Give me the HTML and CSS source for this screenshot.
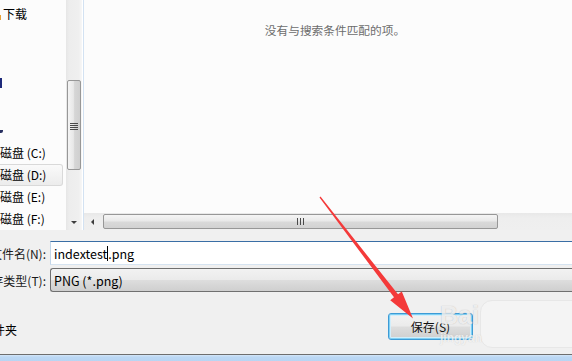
FILE: index.html
```html
<!DOCTYPE html>
<html lang="zh-CN">
<head>
<meta charset="utf-8">
<title>保存</title>
<link rel="stylesheet" href="styles.css">
</head>
<body>
<div class="dialog">
  <div class="top">
    <div class="nav">
      <div class="nav-item first"><span class="ico-edge"></span><span class="nav-text">下载</span></div>
      <div class="nav-mark mark-a"></div>
      <div class="nav-mark mark-b"></div>
      <div class="nav-item drive"><span class="nav-text">本地磁盘 (C:)</span></div>
      <div class="nav-item drive selected"><span class="nav-text">本地磁盘 (D:)</span></div>
      <div class="nav-item drive"><span class="nav-text">本地磁盘 (E:)</span></div>
      <div class="nav-item drive"><span class="nav-text">本地磁盘 (F:)</span></div>
    </div>
    <div class="vscroll">
      <div class="vthumb"><div class="vgrip"><i></i><i></i><i></i><i></i></div></div>
      <div class="down-arrow"></div>
    </div>
    <div class="sep"></div>
    <div class="content">
      <div class="msg">没有与搜索条件匹配的项。</div>
      <div class="hscroll">
        <div class="left-arrow"></div>
        <div class="hthumb"><div class="hgrip"><i></i><i></i><i></i></div></div>
      </div>
    </div>
  </div>

  <div class="form">
    <div class="row">
      <div class="label"><span>文件名(N):</span></div>
      <div class="input"><span>indextest</span><span class="caret"></span><span>.png</span></div>
    </div>
    <div class="row second">
      <div class="label"><span>保存类型(T):</span></div>
      <div class="combo">PNG (*.png)</div>
    </div>
  </div>

  <div class="footer">
    <div class="hide-folders"><span>隐藏文件夹</span></div>
    <div class="save-btn">保存(S)</div>
  </div>

  <div class="taskbar"></div>

  <div class="watermark">
    <div class="wm-box"></div>
    <div class="wm-bai">Bai</div>
    <div class="wm-jy">jingyan</div>
  </div>

  <svg class="arrow" width="572" height="361" viewBox="0 0 572 361">
    <polygon points="320.5,196.6 398,294.3 401.8,291.4 413,318.5 390.2,300.3 394,297.3 319.5,197.4" fill="#f43a3a"/>
  </svg>
</div>
</body>
</html>
```

FILE: styles.css
```css
* { box-sizing: border-box; }
html, body { margin: 0; padding: 0; }
body {
  width: 572px;
  height: 361px;
  overflow: hidden;
  background: #f0f0f0;
  font-family: "Noto Sans CJK SC", "Noto Sans", sans-serif;
  font-size: 12px;
  color: #000;
}
.dialog {
  position: relative;
  width: 572px;
  height: 361px;
  display: flex;
  flex-direction: column;
}
.top {
  display: flex;
  height: 230px;
  flex: none;
}
.nav {
  width: 66px;
  background: #fcfcfc;
  overflow: hidden;
  display: flex;
  flex-direction: column;
}
.nav-item {
  height: 22px;
  display: flex;
  align-items: center;
  white-space: nowrap;
  flex: none;
  line-height: 22px;
}
.nav-item.first { margin-top: 3px; }
.ico-edge {
  width: 1px;
  height: 5px;
  background: #e8a33a;
  margin-right: 2px;
  margin-top: 6px;
}
.nav-item.drive .nav-text { margin-left: -24px; }
.nav-item.drive {
  margin-right: 3px;
  border: 1px solid transparent;
  border-left: 0;
  border-radius: 0 3px 3px 0;
}
.nav-item.selected {
  background: linear-gradient(#fafafa, #ececec);
  border-color: #d9d9d9;
}
.nav-mark { flex: none; }
.mark-a {
  width: 2px;
  height: 10px;
  background: #1e2a7a;
  margin-top: 53px;
}
.mark-b {
  width: 3px;
  height: 3px;
  background: #283060;
  margin-top: 42px;
  margin-bottom: 9px;
  border-radius: 0 0 2px 0;
}

.vscroll {
  width: 16px;
  background: linear-gradient(90deg, #e6e6e6, #ededed 20%, #efefef 80%, #f7f7f7);
  display: flex;
  flex-direction: column;
  align-items: flex-start;
}
.vthumb {
  margin-top: 80px;
  margin-left: 1px;
  width: 14px;
  height: 90px;
  border: 1px solid #979797;
  border-radius: 2px;
  background: linear-gradient(90deg, #f4f4f4, #e8e8e8 45%, #d6d6d6 55%, #cfcfcf);
  display: flex;
  align-items: center;
  justify-content: center;
}
.vgrip { display: flex; flex-direction: column; gap: 1px; margin-top: 2px; }
.vgrip i { display: block; width: 8px; height: 1px; background: #4a4a4a; }
.down-arrow {
  margin-top: auto;
  margin-bottom: 6px;
  margin-left: 5px;
  width: 0; height: 0;
  border-left: 3px solid transparent;
  border-right: 3px solid transparent;
  border-top: 3px solid #3c3c3c;
}
.sep {
  width: 2px;
  background: linear-gradient(90deg, #ffffff 50%, #d3e2f2 50%);
}
.content {
  flex: 1;
  display: flex;
  flex-direction: column;
  background: #fcfcfc;
}
.msg {
  flex: 1;
  text-align: center;
  padding-left: 14px;
  padding-top: 21px;
  color: #6d6d6d;
  font-size: 11.7px;
  line-height: 18px;
}
.hscroll {
  height: 17px;
  background: linear-gradient(#e8e8e8, #eeeeee 30%, #efefef);
  display: flex;
  align-items: center;
}
.left-arrow {
  margin-left: 7px;
  width: 0; height: 0;
  border-top: 3px solid transparent;
  border-bottom: 3px solid transparent;
  border-right: 3px solid #3c3c3c;
}
.hthumb {
  margin-left: 9px;
  width: 395px;
  height: 15px;
  border: 1px solid #979797;
  border-radius: 2px;
  background: linear-gradient(#f5f5f5, #e9e9e9 45%, #d9d9d9 55%, #d2d2d2);
  display: flex;
  align-items: center;
  justify-content: flex-end;
  padding-right: 192px;
}
.hgrip { display: flex; gap: 1px; }
.hgrip i { display: block; width: 1px; height: 7px; background: #4a4a4a; margin-right: 1px; }

.form {
  padding-top: 11px;
  flex: none;
}
.row {
  display: flex;
  align-items: center;
  height: 24px;
  gap: 4px;
}
.row.second { margin-top: 3px; }
.label {
  width: 46px;
  display: flex;
  justify-content: flex-end;
  overflow: hidden;
  white-space: nowrap;
  color: #1a1a1a;
}
.label span { flex: none; }
.input {
  flex: 1;
  height: 24px;
  background: #fff;
  border: 1px solid #c3d6e9;
  border-top-color: #3a6ea5;
  border-right: 0;
  border-bottom-color: #d6e4f1;
  padding-left: 3px;
  display: flex;
  align-items: center;
  font-size: 12.5px;
  white-space: nowrap;
}
.caret {
  display: inline-block;
  width: 1px;
  height: 15px;
  background: #000;
}
.combo {
  flex: 1;
  height: 24px;
  border: 1px solid #707070;
  border-right: 0;
  border-radius: 3px 0 0 3px;
  background: linear-gradient(#f2f2f2, #ebebeb 48%, #dddddd 52%, #cfcfcf);
  padding-left: 3px;
  display: flex;
  align-items: center;
  font-size: 12.5px;
}

.footer {
  flex: none;
  display: flex;
  align-items: center;
  margin-top: 21px;
  height: 27px;
}
.hide-folders {
  width: 17px;
  display: flex;
  justify-content: flex-end;
  overflow: hidden;
  white-space: nowrap;
  margin-top: 6px;
}
.hide-folders span { flex: none; }
.save-btn {
  margin-left: 371px;
  width: 85px;
  height: 27px;
  border: 1px solid #3d9bd6;
  border-radius: 3px;
  box-shadow: inset 0 0 0 1px #7fd0f4, inset 0 0 0 2px #d2eefb;
  background: linear-gradient(#f2f2f2, #ebebeb 48%, #dddddd 52%, #cfcfcf);
  display: flex;
  align-items: center;
  justify-content: center;
  color: #111;
}
.taskbar {
  margin-top: auto;
  height: 7px;
  border-top: 1px solid #6e6e6e;
  background: linear-gradient(#d4e6f8 0, #bcd8f4 2px, #b8d5f3);
  flex: none;
}

.watermark {
  position: absolute;
  left: 0; top: 0;
  pointer-events: none;
}
.wm-box {
  position: absolute;
  left: 480px;
  top: 300px;
  width: 110px;
  height: 48px;
  border-radius: 12px;
  background: #f4f4f4;
  border: 1px solid #e7e7e7;
}
.wm-bai {
  position: absolute;
  left: 440px;
  top: 301px;
  font-family: "Liberation Sans", sans-serif;
  font-weight: bold;
  font-size: 25px;
  color: rgba(255,255,255,0.75);
  text-shadow: 0 0 1px rgba(120,120,120,0.5);
}
.wm-jy {
  position: absolute;
  left: 440px;
  top: 331px;
  font-family: "Liberation Sans", sans-serif;
  font-weight: bold;
  font-size: 12px;
  color: rgba(255,255,255,0.7);
  text-shadow: 0 0 1px rgba(150,150,150,0.4);
}
.arrow {
  position: absolute;
  left: 0;
  top: 0;
  pointer-events: none;
}
```
